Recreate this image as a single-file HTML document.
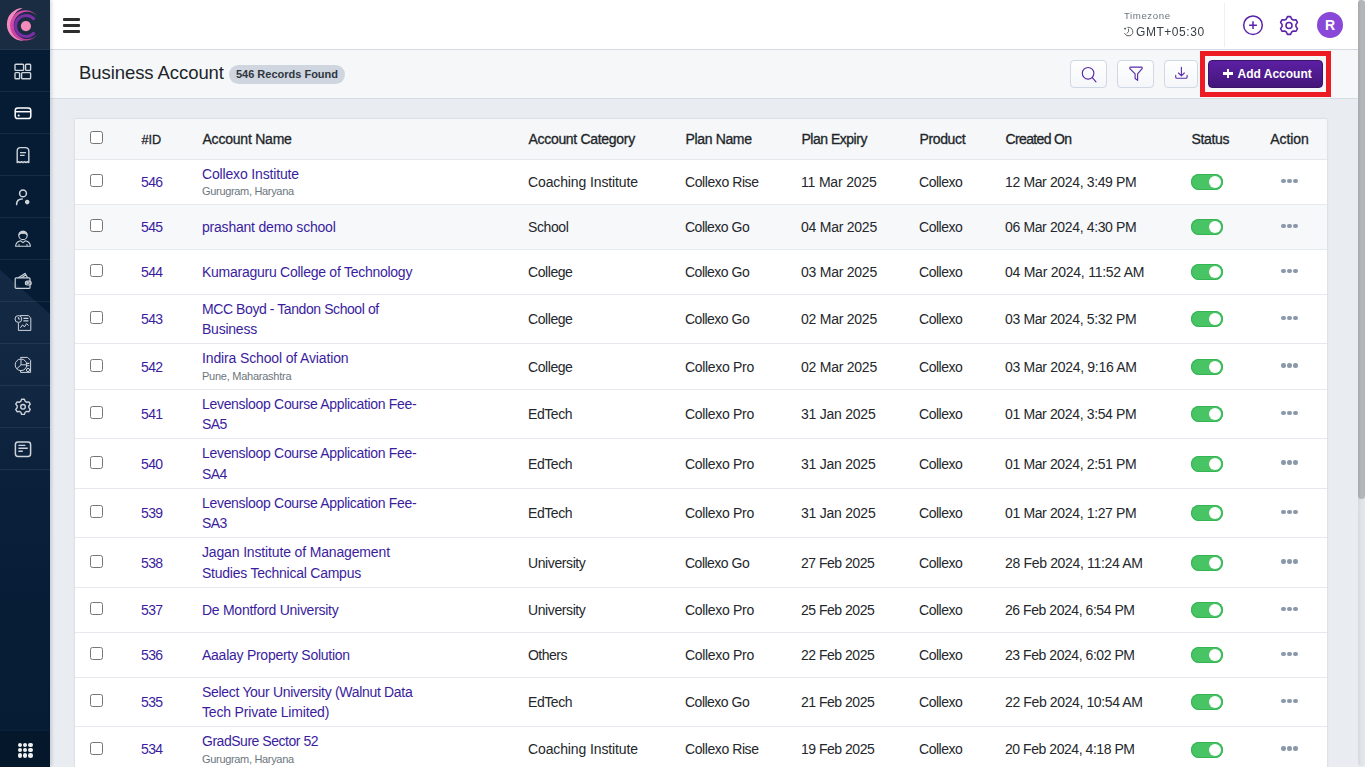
<!DOCTYPE html>
<html lang="en">
<head>
<meta charset="utf-8">
<title>Business Account</title>
<style>
*{box-sizing:border-box;margin:0;padding:0}
html,body{width:1365px;height:767px;overflow:hidden}
body{position:relative;background:#e9edf2;font-family:"Liberation Sans",Arial,sans-serif;font-size:14px;color:#212529}
/* sidebar */
.side{position:absolute;left:0;top:0;width:50px;height:767px;background:#061c35;z-index:5;box-shadow:1px 0 4px rgba(20,30,45,.22)}
.side .bgp{position:absolute;left:0;top:0}
.logo{position:absolute;left:0;top:0;width:50px;height:50px;background:#1a2c42;border-bottom:1px solid #24364c}
.logo svg{position:absolute;left:0;top:0}
.mi{position:absolute;left:0;width:50px;height:42px;border-bottom:1px solid rgba(255,255,255,.07)}
.mi svg{position:absolute;left:13px;top:10.6px;width:20px;height:20px;overflow:visible}
.apps{position:absolute;left:0;top:730px;width:50px;height:37px;background:#04172b;border-top:1px solid #0b2139}
.apps i{position:absolute;width:4.6px;height:4.6px;border-radius:50%;background:#f1f1f1}
/* header */
.hdr{position:absolute;left:50px;top:0;width:1308px;height:50px;background:#fff;border-bottom:1px solid #d3dae3}
.burger{position:absolute;left:13px;top:18px;width:17px;height:15px}
.burger i{position:absolute;left:0;width:17.2px;height:2.8px;background:#2d2d2d;border-radius:1px}
.tz1{will-change:opacity;position:absolute;left:1074px;top:9px;font-size:9.7px;line-height:13px;color:#6c757d;letter-spacing:.55px}
.tz2{position:absolute;left:1086px;top:24px;font-size:12px;line-height:16px;color:#3a4046;letter-spacing:.55px;will-change:opacity}
.tzi{position:absolute;left:1073px;top:26px;width:11px;height:11px}
.vdiv{position:absolute;left:1174px;top:3px;width:1px;height:44px;background:#eceff3}
.hic{position:absolute;top:14px;width:22px;height:22px}
.av{position:absolute;left:1267px;top:12px;width:26px;height:26px;border-radius:50%;background:#8a48d8;color:#fff;font-weight:bold;font-size:14px;line-height:26px;text-align:center}
/* title bar */
.tbar{position:absolute;left:50px;top:50px;width:1308px;height:49px;background:#f5f7f9;border-bottom:1px solid #d6dce4}
.ttl{position:absolute;left:29px;top:11px;font-size:18.5px;line-height:24px;color:#212529;white-space:nowrap;letter-spacing:-.07px}
.badge{position:absolute;left:179px;top:15px;width:116px;height:19px;border-radius:10px;background:#cfd6df;color:#2f3640;font-weight:bold;font-size:11px;line-height:19px;text-align:center;white-space:nowrap}
.ib{position:absolute;top:10px;height:28px;border:1px solid #cfd8e3;border-radius:4px;background:linear-gradient(#fff,#f4f6f9)}
.ib svg{position:absolute;left:0;top:0}
.red{position:absolute;left:1150px;top:1px;width:131px;height:46px;border:5px solid #ed1c24}
.add{position:absolute;left:1158px;top:10px;width:115px;height:28px;border-radius:4px;background:linear-gradient(#5c1fa3,#43177a);border:1px solid #3a1468;color:#fff;font-weight:bold;font-size:12px;line-height:26px;white-space:nowrap}
.add span{position:absolute;left:28.5px;top:0}
.add i{position:absolute;background:#fff}
/* table card */
.card{position:absolute;left:75px;top:119px;width:1252px;height:660px;background:#fff;box-shadow:0 0 2px rgba(120,135,155,.35)}
.tr{position:absolute;left:0;width:1252px;display:flex;align-items:center;border-bottom:1px solid #e6eaef;background:#fff}
.tr.th{background:#f5f7f9;border-bottom:1px solid #e4e8ed}
.tr.hov{background:#f7f8fa}
.c{flex:none;white-space:nowrap;line-height:20px;color:#24272b}
.th .c{color:#212529;-webkit-text-stroke:.3px #212529}
.c1{width:66px;padding-left:15px;height:100%;position:relative}
.c2{width:61px}.c3{width:326px}.c4{width:157px}.c5{width:116px}.c6{width:118px}.c7{width:86px}.c8{width:186px}.c9{width:60px}.c10{width:76px;text-align:center}
.lnk{color:#3a1d9e}
.nm{line-height:20.3px}
.sub{font-size:11px;line-height:16px;color:#6c757d;margin-top:-1px;margin-bottom:1px}
.cb{position:absolute;left:15px;top:50%;margin-top:-8px;width:13px;height:13px;border:1px solid #767676;border-radius:2.5px;background:#fff}
.th .cb{margin-top:-8px}
.tg{display:block;width:32px;height:16px;border-radius:8px;background:#48c464;box-shadow:inset 0 0 0 1px #35b454;position:relative}
.tg:after{content:"";position:absolute;right:2px;top:2px;width:12px;height:12px;border-radius:50%;background:#fff}
.dots{display:inline-block;width:17px;height:5px;position:relative;vertical-align:middle;top:-2px;left:.5px}
.dots i{position:absolute;top:0;width:4.5px;height:4.5px;border-radius:50%;background:#8a98aa}
.dots i:nth-child(1){left:0}.dots i:nth-child(2){left:6px}.dots i:nth-child(3){left:12px}
/* scrollbar */
.sbar{position:absolute;left:1358px;top:0;width:7px;height:766px;background:linear-gradient(90deg,#d5d9de,#e0e3e8 45%,#e3e6ea);border-radius:4px}
.thumb{position:absolute;left:0;top:0;width:7px;height:499px;border-radius:4px;background:linear-gradient(90deg,#a7abae,#b3b7ba 50%,#b1b5b8)}

.lr .c2 .t,.lr .c4 .t,.lr .c5 .t,.lr .c6 .t,.lr .c7 .t,.lr .c8 .t{position:relative;top:-.6px}
.th .t{position:relative;left:.5px}

</style>
</head>
<body>
<div class="side">
<svg class="bgp" width="50" height="767" viewBox="0 0 50 767">
<defs><linearGradient id="sg" x1="0" y1="0" x2="0" y2="1"><stop offset="0" stop-color="#142944"/><stop offset="0.28" stop-color="#112641"/><stop offset="0.46" stop-color="#0b213b"/><stop offset="0.75" stop-color="#071d36"/><stop offset="1" stop-color="#061c35"/></linearGradient></defs>
<path d="M0 269.7 L50 314 L50 730 L0 730 Z" fill="url(#sg)"/>
</svg>
<div class="logo"><svg width="50" height="50" viewBox="0 0 50 50">
<defs><linearGradient id="mg" x1="0" y1="0" x2="1" y2="1"><stop offset="0" stop-color="#d64dab"/><stop offset="1" stop-color="#b8399b"/></linearGradient></defs>
<path d="M22.8 8.1 A16.3 16.3 0 0 0 23.5 40.7 A17.2 17.2 0 0 1 22.8 8.1 Z" fill="#f28ac0"/>
<path d="M37.3 16.1 A15.2 15.2 0 1 0 37.7 34.2 A13.6 13.6 0 1 1 37.3 16.1 Z" fill="url(#mg)"/>
<path d="M34.4 19.7 A10.5 10.5 0 1 0 34.4 32.3" fill="none" stroke="#7a2fa5" stroke-width="3"/>
<circle cx="25.9" cy="26.1" r="5.1" fill="#f48bbb"/>
</svg></div>
<!-- menu items -->
<div class="mi" style="top:50px"><svg viewBox="0 0 20 20" fill="none" stroke="#cfd4da" stroke-width="1.4" stroke-linejoin="round"><rect x="2" y="3.2" width="8.6" height="6.2" rx=".8"/><rect x="12.6" y="3.2" width="5" height="6.2" rx=".8"/><rect x="2" y="11.6" width="4.6" height="6.2" rx=".8"/><rect x="8.6" y="11.6" width="9" height="6.2" rx=".8"/></svg></div>
<div class="mi" style="top:92px"><svg viewBox="0 0 20 20" fill="none" stroke="#fff" stroke-width="1.5"><rect x="2.2" y="5" width="15.6" height="10.6" rx="2.6"/><path d="M2.2 8.7 H17.8"/><circle cx="5.7" cy="12.6" r="1" fill="#fff" stroke="none"/></svg></div>
<div class="mi" style="top:134px"><svg viewBox="0 0 20 20" fill="none" stroke="#cfd4da" stroke-width="1.4" stroke-linejoin="round"><path d="M4.200 17.600 V5.800 a3.200 3.200 0 0 1 3.200 -3.200 h5.200 a3.200 3.200 0 0 1 3.200 3.200 V17.600 l-1.45 -1 l-1.45 1 l-1.45 -1 l-1.45 1 l-1.45 -1 l-1.45 1 l-1.45 -1 Z"/><path d="M7 7.600 h6 M7 10.400 h4.600" stroke-width="1.3"/></svg></div>
<div class="mi" style="top:176px"><svg viewBox="0 0 20 20" fill="none" stroke="#cfd4da" stroke-width="1.55" stroke-linecap="round"><circle cx="10" cy="6.4" r="3.4"/><path d="M3.6 17.6 c0 -3.6 2.4 -5.6 5.6 -5.6"/><circle cx="14.2" cy="15" r="1.5" fill="#cfd4da" stroke-width="1.6" stroke-dasharray="1 .6"/></svg></div>
<div class="mi" style="top:218px"><svg viewBox="0 0 20 20" fill="none" stroke="#cfd4da" stroke-width="1.1" stroke-linejoin="round"><circle cx="10" cy="6.4" r="4.2"/><path d="M5.9 6.2 c.3 -3 2 -4 4.1 -4 s3.800 1 4.100 4 c-1.400 -1.600 -2.400 -1.800 -4.100 -1.800 s-2.700 .2 -4.100 1.800 Z" fill="#cfd4da" stroke-width=".8"/><path d="M2.600 17.200 c.2 -3.200 1.800 -4.600 5 -5.400 l2.400 1.800 l2.400 -1.800 c3.200 .8 4.800 2.200 5 5.400 Z"/><path d="M6 17.200 v-2.200 M14 17.200 v-2.200" stroke-width=".9"/></svg></div>
<div class="mi" style="top:260px"><svg viewBox="0 0 20 20" fill="none" stroke="#cfd4da" stroke-width="1.2" stroke-linejoin="round"><rect x="2.2" y="6.800" width="14.800" height="10.600" rx="1"/><path d="M5.400 6.800 l6.600 -4.400 l2.600 4.400 M8.600 6.800 l4.800 -3.200"/><rect x="12.400" y="10.200" width="5.800" height="3.800" rx="1.900"/><circle cx="14.600" cy="12.100" r=".8"/></svg></div>
<div class="mi" style="top:302px"><svg viewBox="0 0 20 20" fill="none" stroke="#cfd4da" stroke-width="1" stroke-linejoin="round"><g transform="translate(0 -.6)"><path d="M7 3.2 h8.4 l2.4 2.4 V18 H5.4 V10.4"/><circle cx="5.4" cy="6.6" r="3.4"/><path d="M5.4 4.6 v2 h1.8"/><path d="M10.4 6 h5 M10.4 8.4 h5" stroke-width="1.2"/><path d="M7.4 15.4 l2.2 -3 l1.8 2.2 l2.2 -3.4 l2 2"/></g></svg></div>
<div class="mi" style="top:344px"><svg viewBox="0 0 20 20" fill="none" stroke="#cfd4da" stroke-width="1" stroke-linejoin="round"><g transform="translate(0 -.6)"><path d="M7.6 4 V3 h7 l3 3 V18 H7.6 v-1.6"/><circle cx="8" cy="10.4" r="5.8"/><path d="M8 4.6 v5.8 l-4.2 4 M8 10.4 h5.8"/><path d="M13 9 h3.4 M13 11.4 h3.4" stroke-width="1.1"/><circle cx="15" cy="15.6" r="1.6"/></g></svg></div>
<div class="mi" style="top:386px"><svg viewBox="0 0 20 20" fill="none" stroke="#cfd4da" stroke-width="1.5" stroke-linejoin="round"><g transform="translate(10 9.800) scale(.93) translate(-10 -10.100)"><path d="M11.44 1.93 L8.56 1.93 L7.64 4.26 L6.12 5.14 L3.64 4.76 L2.20 7.26 L3.76 9.22 L3.76 10.98 L2.20 12.94 L3.64 15.44 L6.12 15.06 L7.64 15.94 L8.56 18.27 L11.44 18.27 L12.36 15.94 L13.88 15.06 L16.36 15.44 L17.80 12.94 L16.24 10.98 L16.24 9.22 L17.80 7.26 L16.36 4.76 L13.88 5.14 L12.36 4.26 Z"/><circle cx="10" cy="10.1" r="2.5"/></g></svg></div>
<div class="mi" style="top:428px"><svg viewBox="0 0 20 20" fill="none" stroke="#cfd4da" stroke-width="1.5"><rect x="2.4" y="3" width="15.2" height="14.400" rx="2.6"/><path d="M5.400 6.400 h7 M5.400 9.300 h9.400 M5.400 12.200 h4.400" stroke-width="1.4"/></svg></div>
<div class="apps"><i style="left:17.50px;top:11.60px"></i><i style="left:22.75px;top:11.60px"></i><i style="left:28.00px;top:11.60px"></i><i style="left:17.50px;top:16.85px"></i><i style="left:22.75px;top:16.85px"></i><i style="left:28.00px;top:16.85px"></i><i style="left:17.50px;top:22.10px"></i><i style="left:22.75px;top:22.10px"></i><i style="left:28.00px;top:22.10px"></i></div>
</div>
<div class="hdr">
<div class="burger"><i style="top:0"></i><i style="top:5.9px"></i><i style="top:11.8px"></i></div>
<div class="tz1">Timezone</div>
<svg class="tzi" viewBox="0 0 12 12" fill="none" stroke="#4a5056" stroke-width="1" stroke-linecap="round"><path d="M5.200 1.500 A4.700 4.700 0 1 1 1.700 8.200"/><path d="M6 3.300 V6.300 L4.300 7.900" stroke-width=".9"/><path d="M.9 2.100 L3.700 2 L2.300 4.300 Z" fill="#4a5056" stroke="none"/></svg>
<div class="tz2">GMT+05:30</div>
<div class="vdiv"></div>
<svg class="hic" style="left:1192px" viewBox="0 0 22 22" fill="none" stroke="#5a22ab" stroke-width="1.5"><circle cx="11" cy="11.200" r="9.300"/><path d="M11 7.300 v7.800 M7.100 11.200 h7.800" stroke-width="1.5"/></svg>
<svg class="hic" style="left:1228px" viewBox="0 0 22 22" fill="none" stroke="#5a22ab" stroke-width="1.55" stroke-linejoin="round"><g transform="translate(0 .5)"><path d="M12.56 2.14 L9.44 2.14 L8.38 4.51 L6.69 5.48 L4.11 5.21 L2.54 7.92 L4.07 10.03 L4.07 11.97 L2.54 14.08 L4.11 16.79 L6.69 16.52 L8.38 17.49 L9.44 19.86 L12.56 19.86 L13.62 17.49 L15.31 16.52 L17.89 16.79 L19.46 14.08 L17.93 11.97 L17.93 10.03 L19.46 7.92 L17.89 5.21 L15.31 5.48 L13.62 4.51 Z"/><circle cx="11" cy="11" r="3"/></g></svg>
<div class="av">R</div>
</div>
<div class="tbar">
<div class="ttl">Business Account</div>
<div class="badge">546 Records Found</div>
<div class="ib" style="left:1020px;width:37px"><svg width="35" height="26" viewBox="0 0 35 26" fill="none" stroke="#5a2ca8" stroke-width="1.15" stroke-linecap="round"><circle cx="17.1" cy="12.300" r="5.800"/><path d="M21.300 16.600 L25 20.800"/></svg></div>
<div class="ib" style="left:1067px;width:37px"><svg width="35" height="26" viewBox="0 0 35 26" fill="none" stroke="#5a2ca8" stroke-width="1.15" stroke-linejoin="round"><path d="M12.600 6.100 H23.400 a.9 .9 0 0 1 .7 1.500 L19.600 12.900 V19.400 L17.100 17.500 V12.900 L11.900 7.600 a.9 .9 0 0 1 .7 -1.500 Z"/></svg></div>
<div class="ib" style="left:1114px;width:34px"><svg width="32" height="26" viewBox="0 0 32 26" fill="none" stroke="#5a2ca8" stroke-width="1.1" stroke-linecap="round" stroke-linejoin="round"><path d="M16.400 6.300 V14.800 M13.500 12 L16.400 14.900 L19.300 12"/><path d="M10.700 14.400 V16 a1.300 1.300 0 0 0 1.300 1.300 H20.800 a1.300 1.300 0 0 0 1.300 -1.300 V14.400"/></svg></div>
<div class="red"></div>
<div class="add"><i style="left:18px;top:7.600px;width:2.400px;height:9.800px"></i><i style="left:14.300px;top:11.300px;width:9.800px;height:2.400px"></i><span>Add Account</span></div>
</div>
<div class="card">
<div class="tr th" style="top:0;height:41px"><div class="c c1"><span class="cb"></span></div><div class="c c2"><span class="t" style="font-size:12.7px;letter-spacing:0.00px">#ID</span></div><div class="c c3"><span class="t" style="letter-spacing:-0.22px">Account Name</span></div><div class="c c4"><span class="t" style="letter-spacing:-0.31px">Account Category</span></div><div class="c c5"><span class="t" style="letter-spacing:-0.35px">Plan Name</span></div><div class="c c6"><span class="t" style="letter-spacing:-0.49px">Plan Expiry</span></div><div class="c c7"><span class="t" style="letter-spacing:-0.37px">Product</span></div><div class="c c8"><span class="t" style="letter-spacing:-0.64px">Created On</span></div><div class="c c9"><span class="t" style="letter-spacing:-0.32px">Status</span></div><div class="c c10"><span class="t" style="letter-spacing:-0.04px">Action</span></div></div>
<div class="tr" style="top:41px;height:45px"><div class="c c1"><span class="cb"></span></div><div class="c c2 lnk"><span class="t" style="letter-spacing:-0.60px">546</span></div><div class="c c3"><div><div class="lnk nm"><span class="t" style="letter-spacing:-0.16px">Collexo Institute</span></div><div class="sub"><span class="t" style="letter-spacing:-0.32px">Gurugram, Haryana</span></div></div></div><div class="c c4"><span class="t" style="letter-spacing:-0.12px">Coaching Institute</span></div><div class="c c5"><span class="t" style="letter-spacing:-0.42px">Collexo Rise</span></div><div class="c c6"><span class="t" style="letter-spacing:-0.18px">11 Mar 2025</span></div><div class="c c7"><span class="t" style="letter-spacing:-0.47px">Collexo</span></div><div class="c c8"><span class="t" style="letter-spacing:-0.36px">12 Mar 2024, 3:49 PM</span></div><div class="c c9"><span class="tg"></span></div><div class="c c10"><span class="dots"><i></i><i></i><i></i></span></div></div>
<div class="tr hov" style="top:86px;height:45px"><div class="c c1"><span class="cb"></span></div><div class="c c2 lnk"><span class="t" style="letter-spacing:-0.60px">545</span></div><div class="c c3"><div><div class="lnk nm"><span class="t" style="letter-spacing:-0.21px">prashant demo school</span></div></div></div><div class="c c4"><span class="t" style="letter-spacing:-0.40px">School</span></div><div class="c c5"><span class="t" style="letter-spacing:-0.51px">Collexo Go</span></div><div class="c c6"><span class="t" style="letter-spacing:-0.24px">04 Mar 2025</span></div><div class="c c7"><span class="t" style="letter-spacing:-0.47px">Collexo</span></div><div class="c c8"><span class="t" style="letter-spacing:-0.36px">06 Mar 2024, 4:30 PM</span></div><div class="c c9"><span class="tg"></span></div><div class="c c10"><span class="dots"><i></i><i></i><i></i></span></div></div>
<div class="tr" style="top:131px;height:45px"><div class="c c1"><span class="cb"></span></div><div class="c c2 lnk"><span class="t" style="letter-spacing:-0.60px">544</span></div><div class="c c3"><div><div class="lnk nm"><span class="t" style="letter-spacing:-0.26px">Kumaraguru College of Technology</span></div></div></div><div class="c c4"><span class="t" style="letter-spacing:-0.43px">College</span></div><div class="c c5"><span class="t" style="letter-spacing:-0.51px">Collexo Go</span></div><div class="c c6"><span class="t" style="letter-spacing:-0.24px">03 Mar 2025</span></div><div class="c c7"><span class="t" style="letter-spacing:-0.47px">Collexo</span></div><div class="c c8"><span class="t" style="letter-spacing:-0.25px">04 Mar 2024, 11:52 AM</span></div><div class="c c9"><span class="tg"></span></div><div class="c c10"><span class="dots"><i></i><i></i><i></i></span></div></div>
<div class="tr" style="top:176px;height:49px"><div class="c c1"><span class="cb"></span></div><div class="c c2 lnk"><span class="t" style="letter-spacing:-0.60px">543</span></div><div class="c c3"><div><div class="lnk nm"><span class="t" style="letter-spacing:-0.42px">MCC Boyd - Tandon School of</span><br><span class="t" style="letter-spacing:-0.23px">Business</span></div></div></div><div class="c c4"><span class="t" style="letter-spacing:-0.43px">College</span></div><div class="c c5"><span class="t" style="letter-spacing:-0.51px">Collexo Go</span></div><div class="c c6"><span class="t" style="letter-spacing:-0.24px">02 Mar 2025</span></div><div class="c c7"><span class="t" style="letter-spacing:-0.47px">Collexo</span></div><div class="c c8"><span class="t" style="letter-spacing:-0.36px">03 Mar 2024, 5:32 PM</span></div><div class="c c9"><span class="tg"></span></div><div class="c c10"><span class="dots"><i></i><i></i><i></i></span></div></div>
<div class="tr" style="top:225px;height:46px"><div class="c c1"><span class="cb"></span></div><div class="c c2 lnk"><span class="t" style="letter-spacing:-0.60px">542</span></div><div class="c c3"><div><div class="lnk nm"><span class="t" style="letter-spacing:-0.14px">Indira School of Aviation</span></div><div class="sub"><span class="t" style="letter-spacing:-0.25px">Pune, Maharashtra</span></div></div></div><div class="c c4"><span class="t" style="letter-spacing:-0.43px">College</span></div><div class="c c5"><span class="t" style="letter-spacing:-0.32px">Collexo Pro</span></div><div class="c c6"><span class="t" style="letter-spacing:-0.24px">02 Mar 2025</span></div><div class="c c7"><span class="t" style="letter-spacing:-0.47px">Collexo</span></div><div class="c c8"><span class="t" style="letter-spacing:-0.31px">03 Mar 2024, 9:16 AM</span></div><div class="c c9"><span class="tg"></span></div><div class="c c10"><span class="dots"><i></i><i></i><i></i></span></div></div>
<div class="tr" style="top:271px;height:49px"><div class="c c1"><span class="cb"></span></div><div class="c c2 lnk"><span class="t" style="letter-spacing:-0.60px">541</span></div><div class="c c3"><div><div class="lnk nm"><span class="t" style="letter-spacing:-0.31px">Levensloop Course Application Fee-</span><br><span class="t" style="letter-spacing:-0.65px">SA5</span></div></div></div><div class="c c4"><span class="t" style="letter-spacing:-0.44px">EdTech</span></div><div class="c c5"><span class="t" style="letter-spacing:-0.32px">Collexo Pro</span></div><div class="c c6"><span class="t" style="letter-spacing:-0.24px">31 Jan 2025</span></div><div class="c c7"><span class="t" style="letter-spacing:-0.47px">Collexo</span></div><div class="c c8"><span class="t" style="letter-spacing:-0.36px">01 Mar 2024, 3:54 PM</span></div><div class="c c9"><span class="tg"></span></div><div class="c c10"><span class="dots"><i></i><i></i><i></i></span></div></div>
<div class="tr" style="top:320px;height:50px"><div class="c c1"><span class="cb"></span></div><div class="c c2 lnk"><span class="t" style="letter-spacing:-0.60px">540</span></div><div class="c c3"><div><div class="lnk nm"><span class="t" style="letter-spacing:-0.31px">Levensloop Course Application Fee-</span><br><span class="t" style="letter-spacing:-0.65px">SA4</span></div></div></div><div class="c c4"><span class="t" style="letter-spacing:-0.44px">EdTech</span></div><div class="c c5"><span class="t" style="letter-spacing:-0.32px">Collexo Pro</span></div><div class="c c6"><span class="t" style="letter-spacing:-0.24px">31 Jan 2025</span></div><div class="c c7"><span class="t" style="letter-spacing:-0.47px">Collexo</span></div><div class="c c8"><span class="t" style="letter-spacing:-0.36px">01 Mar 2024, 2:51 PM</span></div><div class="c c9"><span class="tg"></span></div><div class="c c10"><span class="dots"><i></i><i></i><i></i></span></div></div>
<div class="tr" style="top:370px;height:49px"><div class="c c1"><span class="cb"></span></div><div class="c c2 lnk"><span class="t" style="letter-spacing:-0.60px">539</span></div><div class="c c3"><div><div class="lnk nm"><span class="t" style="letter-spacing:-0.31px">Levensloop Course Application Fee-</span><br><span class="t" style="letter-spacing:-0.65px">SA3</span></div></div></div><div class="c c4"><span class="t" style="letter-spacing:-0.44px">EdTech</span></div><div class="c c5"><span class="t" style="letter-spacing:-0.32px">Collexo Pro</span></div><div class="c c6"><span class="t" style="letter-spacing:-0.24px">31 Jan 2025</span></div><div class="c c7"><span class="t" style="letter-spacing:-0.47px">Collexo</span></div><div class="c c8"><span class="t" style="letter-spacing:-0.36px">01 Mar 2024, 1:27 PM</span></div><div class="c c9"><span class="tg"></span></div><div class="c c10"><span class="dots"><i></i><i></i><i></i></span></div></div>
<div class="tr" style="top:419px;height:50px"><div class="c c1"><span class="cb"></span></div><div class="c c2 lnk"><span class="t" style="letter-spacing:-0.60px">538</span></div><div class="c c3"><div><div class="lnk nm"><span class="t" style="letter-spacing:-0.15px">Jagan Institute of Management</span><br><span class="t" style="letter-spacing:-0.24px">Studies Technical Campus</span></div></div></div><div class="c c4"><span class="t" style="letter-spacing:-0.40px">University</span></div><div class="c c5"><span class="t" style="letter-spacing:-0.51px">Collexo Go</span></div><div class="c c6"><span class="t" style="letter-spacing:-0.49px">27 Feb 2025</span></div><div class="c c7"><span class="t" style="letter-spacing:-0.47px">Collexo</span></div><div class="c c8"><span class="t" style="letter-spacing:-0.33px">28 Feb 2024, 11:24 AM</span></div><div class="c c9"><span class="tg"></span></div><div class="c c10"><span class="dots"><i></i><i></i><i></i></span></div></div>
<div class="tr" style="top:469px;height:45px"><div class="c c1"><span class="cb"></span></div><div class="c c2 lnk"><span class="t" style="letter-spacing:-0.60px">537</span></div><div class="c c3"><div><div class="lnk nm"><span class="t" style="letter-spacing:-0.27px">De Montford University</span></div></div></div><div class="c c4"><span class="t" style="letter-spacing:-0.40px">University</span></div><div class="c c5"><span class="t" style="letter-spacing:-0.32px">Collexo Pro</span></div><div class="c c6"><span class="t" style="letter-spacing:-0.49px">25 Feb 2025</span></div><div class="c c7"><span class="t" style="letter-spacing:-0.47px">Collexo</span></div><div class="c c8"><span class="t" style="letter-spacing:-0.45px">26 Feb 2024, 6:54 PM</span></div><div class="c c9"><span class="tg"></span></div><div class="c c10"><span class="dots"><i></i><i></i><i></i></span></div></div>
<div class="tr" style="top:514px;height:45px"><div class="c c1"><span class="cb"></span></div><div class="c c2 lnk"><span class="t" style="letter-spacing:-0.60px">536</span></div><div class="c c3"><div><div class="lnk nm"><span class="t" style="letter-spacing:-0.26px">Aaalay Property Solution</span></div></div></div><div class="c c4"><span class="t" style="letter-spacing:-0.52px">Others</span></div><div class="c c5"><span class="t" style="letter-spacing:-0.32px">Collexo Pro</span></div><div class="c c6"><span class="t" style="letter-spacing:-0.49px">22 Feb 2025</span></div><div class="c c7"><span class="t" style="letter-spacing:-0.47px">Collexo</span></div><div class="c c8"><span class="t" style="letter-spacing:-0.45px">23 Feb 2024, 6:02 PM</span></div><div class="c c9"><span class="tg"></span></div><div class="c c10"><span class="dots"><i></i><i></i><i></i></span></div></div>
<div class="tr" style="top:559px;height:49px"><div class="c c1"><span class="cb"></span></div><div class="c c2 lnk"><span class="t" style="letter-spacing:-0.60px">535</span></div><div class="c c3"><div><div class="lnk nm"><span class="t" style="letter-spacing:-0.31px">Select Your University (Walnut Data</span><br><span class="t" style="letter-spacing:-0.17px">Tech Private Limited)</span></div></div></div><div class="c c4"><span class="t" style="letter-spacing:-0.44px">EdTech</span></div><div class="c c5"><span class="t" style="letter-spacing:-0.51px">Collexo Go</span></div><div class="c c6"><span class="t" style="letter-spacing:-0.49px">21 Feb 2025</span></div><div class="c c7"><span class="t" style="letter-spacing:-0.47px">Collexo</span></div><div class="c c8"><span class="t" style="letter-spacing:-0.38px">22 Feb 2024, 10:54 AM</span></div><div class="c c9"><span class="tg"></span></div><div class="c c10"><span class="dots"><i></i><i></i><i></i></span></div></div>
<div class="tr lr" style="top:608px;height:46px"><div class="c c1"><span class="cb"></span></div><div class="c c2 lnk"><span class="t" style="letter-spacing:-0.60px">534</span></div><div class="c c3"><div><div class="lnk nm"><span class="t" style="letter-spacing:-0.47px">GradSure Sector 52</span></div><div class="sub"><span class="t" style="letter-spacing:-0.32px">Gurugram, Haryana</span></div></div></div><div class="c c4"><span class="t" style="letter-spacing:-0.12px">Coaching Institute</span></div><div class="c c5"><span class="t" style="letter-spacing:-0.42px">Collexo Rise</span></div><div class="c c6"><span class="t" style="letter-spacing:-0.49px">19 Feb 2025</span></div><div class="c c7"><span class="t" style="letter-spacing:-0.47px">Collexo</span></div><div class="c c8"><span class="t" style="letter-spacing:-0.45px">20 Feb 2024, 4:18 PM</span></div><div class="c c9"><span class="tg"></span></div><div class="c c10"><span class="dots"><i></i><i></i><i></i></span></div></div>
</div>
<div class="sbar"><div class="thumb"></div></div>
</body>
</html>
